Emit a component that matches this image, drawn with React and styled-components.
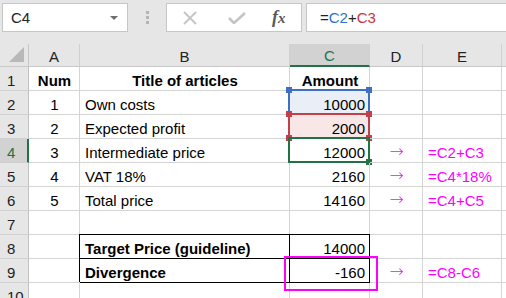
import React from "react";
import styled, { createGlobalStyle, css } from "styled-components";

const GlobalStyle = createGlobalStyle`
  html, body {
    margin: 0;
    padding: 0;
    background: #ffffff;
  }
  body {
    font-family: "Liberation Sans", Arial, sans-serif;
  }
`;

const REF_COLORS = {
  blue: { line: "#3f6fc4", fill: "#e9eef7" },
  red: { line: "#c2404a", fill: "#f9e6e7" },
  green: { line: "#217346", fill: "transparent" },
};

const rows = [
  { n: 1, a: "Num", b: "Title of articles", c: "Amount", head: true },
  { n: 2, a: "1", b: "Own costs", c: "10000", mark: "blue" },
  { n: 3, a: "2", b: "Expected profit", c: "2000", mark: "red" },
  { n: 4, a: "3", b: "Intermediate price", c: "12000", mark: "green", f: "=C2+C3" },
  { n: 5, a: "4", b: "VAT 18%", c: "2160", f: "=C4*18%" },
  { n: 6, a: "5", b: "Total price", c: "14160", f: "=C4+C5" },
  { n: 7 },
  { n: 8, b: "Target Price (guideline)", c: "14000", boxed: true },
  { n: 9, b: "Divergence", c: "-160", boxed: true, f: "=C8-C6", circled: true },
  { n: 10 },
];

const App = () => {
  return (
    <>
      <GlobalStyle />
      <Frame>
        <FormulaBar>
          <NameBox>
            C4
            <Caret />
          </NameBox>
          <Grip>
            <Dot />
            <Dot />
            <Dot />
          </Grip>
          <ActionBox>
            <svg width="16" height="14" viewBox="0 0 16 14">
              <path d="M2 1 L14 13 M14 1 L2 13" stroke="#c4c4c4" strokeWidth="1.8" fill="none" />
            </svg>
            <svg width="18" height="12" viewBox="0 0 18 12">
              <path d="M1 6 L6 11 L17 1" stroke="#c4c4c4" strokeWidth="2.6" fill="none" />
            </svg>
            <Fx>
              f<small>x</small>
            </Fx>
          </ActionBox>
          <FormulaInput>
            =<Ref $c="#2a72d4">C2</Ref>+<Ref $c="#d0303a">C3</Ref>
          </FormulaInput>
        </FormulaBar>

        <Sheet>
          <Corner />
          {["A", "B", "C", "D", "E", ""].map(l => (
            <ColHead key={l || "x"} $active={l === "C"}>
              {l}
            </ColHead>
          ))}

          {rows.map(r => (
            <React.Fragment key={r.n}>
              <RowHead $active={r.n === 4}>{r.n}</RowHead>
              <Cell $align="center" $bold={r.head}>
                {r.a}
              </Cell>
              <Cell $align={r.head ? "center" : "flex-start"} $bold={r.head || r.boxed} $boxed={r.boxed}>
                {r.b}
              </Cell>
              <Cell
                $align={r.head ? "center" : "flex-end"}
                $bold={r.head}
                $boxed={r.boxed}
                $fill={r.mark ? REF_COLORS[r.mark].fill : null}
              >
                {r.c}
                {r.mark && (
                  <RefFrame $c={REF_COLORS[r.mark].line}>
                    {r.mark !== "green" && (
                      <>
                        <Handle $c={REF_COLORS[r.mark].line} $v="top" $h="left" />
                        <Handle $c={REF_COLORS[r.mark].line} $v="top" $h="right" />
                        <Handle $c={REF_COLORS[r.mark].line} $v="bottom" $h="left" />
                        <Handle $c={REF_COLORS[r.mark].line} $v="bottom" $h="right" />
                      </>
                    )}
                    {r.mark === "green" && <Handle $c={REF_COLORS.green.line} $v="bottom" $h="right" />}
                  </RefFrame>
                )}
                {r.circled && <Highlight />}
              </Cell>
              <Cell $align="center" $magenta>
                {r.f && <Arrow>→</Arrow>}
              </Cell>
              <Cell $align="flex-start" $magenta>
                {r.f}
              </Cell>
              <Cell />
            </React.Fragment>
          ))}
        </Sheet>
      </Frame>
    </>
  );
};

const Frame = styled.div`
  width: 506px;
  height: 298px;
  overflow: hidden;
  background: #ffffff;
`;

const FormulaBar = styled.div`
  display: flex;
  align-items: flex-start;
  height: 44px;
  box-sizing: border-box;
  padding: 3px 0 0 2px;
  background: #e6e6e6;
`;

const boxBase = css`
  box-sizing: border-box;
  height: 29px;
  background: #ffffff;
  border: 1px solid #c6c6c6;
  display: flex;
  align-items: center;
`;

const NameBox = styled.div`
  ${boxBase}
  width: 126px;
  padding-left: 8px;
  position: relative;
  font-size: 15px;
  color: #222;
`;

const Caret = styled.span`
  position: absolute;
  right: 9px;
  top: 12px;
  border-left: 4px solid transparent;
  border-right: 4px solid transparent;
  border-top: 4px solid #6e6e6e;
`;

const Grip = styled.div`
  width: 38px;
  height: 29px;
  display: flex;
  flex-direction: column;
  align-items: center;
  justify-content: center;
  gap: 2px;
`;

const Dot = styled.span`
  width: 3px;
  height: 3px;
  background: #b4b4b4;
`;

const ActionBox = styled.div`
  ${boxBase}
  width: 136px;
  padding-left: 15px;
  gap: 30px;
`;

const Fx = styled.span`
  font-family: "Liberation Serif", "Times New Roman", serif;
  font-style: italic;
  font-weight: 700;
  font-size: 18px;
  color: #5a5a5a;
  margin-left: -4px;
  & small {
    font-size: 15px;
  }
`;

const FormulaInput = styled.div`
  ${boxBase}
  flex: 1;
  margin-left: 4px;
  padding-left: 13px;
  font-size: 15px;
  color: #222;
  border-right: none;
`;

const Ref = styled.span`
  color: ${p => p.$c};
`;

const Sheet = styled.div`
  display: grid;
  grid-template-columns: 29px 51px 210px 80px 53px 79px 1fr;
  grid-template-rows: 23px;
  grid-auto-rows: 24px;
  font-size: 15px;
  color: #000;
`;

const headBase = css`
  box-sizing: border-box;
  background: #e6e6e6;
  display: flex;
  align-items: center;
  justify-content: center;
  font-size: 15px;
  color: #222;
`;

const Corner = styled.div`
  ${headBase}
  position: relative;
  border-right: 1px solid #c8c8c8;
  border-bottom: 1px solid #c8c8c8;
  &::after {
    content: "";
    position: absolute;
    right: 4px;
    bottom: 4px;
    border-left: 15px solid transparent;
    border-bottom: 15px solid #b8b8b8;
  }
`;

const ColHead = styled.div`
  ${headBase}
  border-right: 1px solid #d0d0d0;
  border-bottom: 1px solid #c8c8c8;
  padding-top: 2px;
  ${p =>
    p.$active &&
    css`
      background: #d2d2d2;
      color: #217346;
      border-bottom: 2px solid #217346;
    `}
`;

const RowHead = styled.div`
  ${headBase}
  justify-content: flex-start;
  padding: 3px 0 0 7px;
  border-right: 1px solid #c0c0c0;
  border-bottom: 1px solid #d0d0d0;
  ${p =>
    p.$active &&
    css`
      color: #217346;
      border-right: 2px solid #217346;
      background: #d2d2d2;
    `}
`;

const Cell = styled.div`
  box-sizing: border-box;
  position: relative;
  display: flex;
  align-items: center;
  justify-content: ${p => p.$align || "flex-start"};
  padding: 3px 4px 0 5px;
  white-space: nowrap;
  border-right: 1px solid #d4d4d4;
  border-bottom: 1px solid #d4d4d4;
  font-weight: ${p => (p.$bold ? 700 : 400)};
  color: ${p => (p.$magenta ? "#ff00ff" : "#000")};
  background: ${p => p.$fill || "transparent"};
  ${p =>
    p.$boxed &&
    css`
      border-right-color: #000;
      border-bottom-color: #000;
      &::before {
        content: "";
        position: absolute;
        top: -1px;
        left: -1px;
        right: -1px;
        bottom: 0;
        border-top: 1px solid #000;
        border-left: 1px solid #000;
        pointer-events: none;
      }
    `}
`;

const Arrow = styled.span`
  font-family: "DejaVu Sans", sans-serif;
  font-weight: 200;
  font-size: 17px;
  line-height: 1;
  margin-top: -2px;
`;

const RefFrame = styled.span`
  position: absolute;
  top: -2px;
  left: -2px;
  right: -1px;
  bottom: -1px;
  border: 2px solid ${p => p.$c};
  pointer-events: none;
`;

const Handle = styled.span`
  position: absolute;
  width: 6px;
  height: 6px;
  background: ${p => p.$c};
  ${p => (p.$v === "top" ? "top: -4px;" : "bottom: -4px;")}
  ${p => (p.$h === "left" ? "left: -4px;" : "right: -4px;")}
`;

const Highlight = styled.span`
  position: absolute;
  left: -6px;
  top: -3px;
  width: 94px;
  height: 35px;
  box-sizing: border-box;
  border: 2px solid #ff00ff;
  pointer-events: none;
  z-index: 2;
`;

export default App;
